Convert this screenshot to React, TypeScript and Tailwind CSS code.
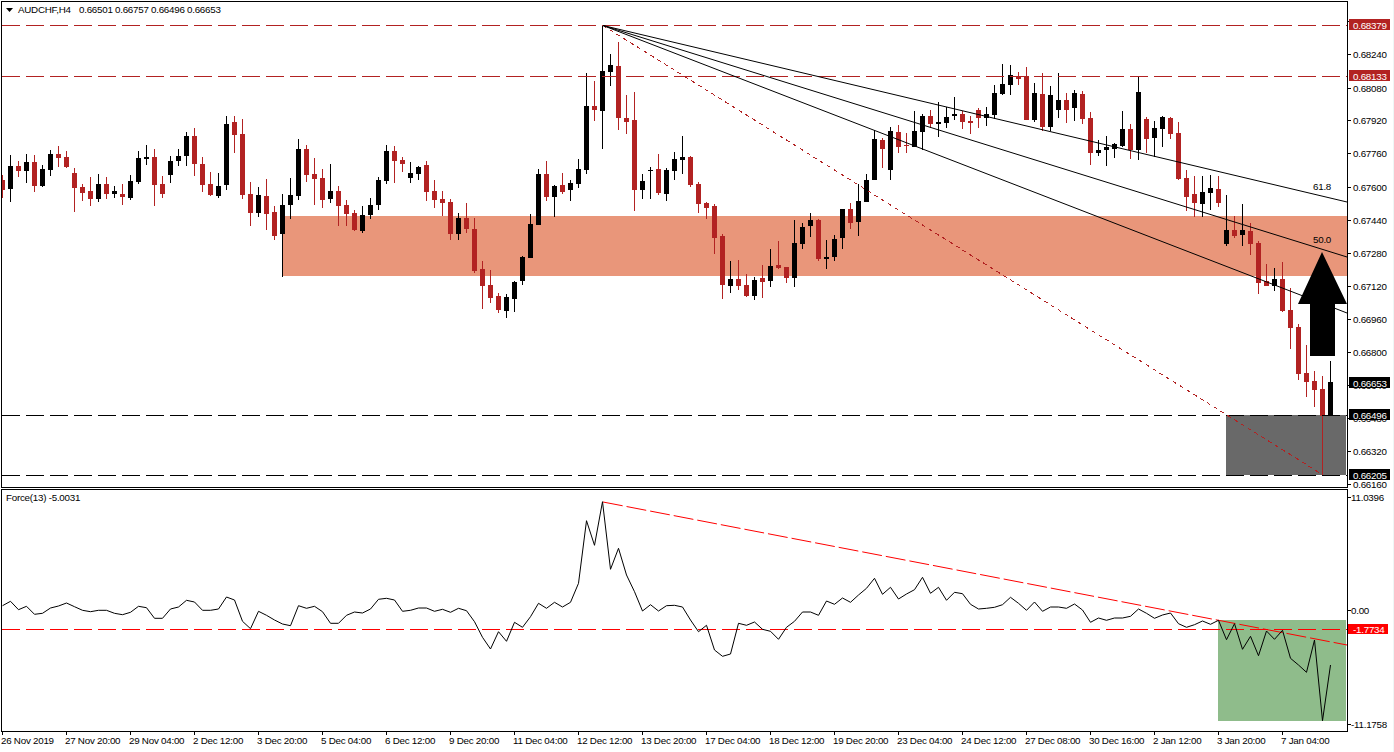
const R = 1;
const K = 0;
// [colour, wick top, body top, body bottom, wick bottom] in tripled page pixels
const candles: number[][] = [
[R,525,540,570,594],[K,465,498,567,605],[R,483,498,513,531],[K,462,486,513,549],[R,465,486,558,576],[K,495,507,558,561],[K,450,462,510,528],[R,438,462,474,501],[R,453,471,501,504],[R,504,519,564,636],
[R,552,561,579,603],[R,531,573,597,618],[K,522,552,597,606],[R,531,552,582,597],[K,558,573,582,594],[R,552,582,591,615],[K,525,543,594,600],[K,453,474,546,552],[K,435,471,477,495],[R,447,471,555,618],
[R,528,552,582,594],[K,468,483,525,549],[K,447,468,483,498],[K,396,408,468,498],[R,384,408,492,528],[R,471,492,555,576],[R,516,552,585,588],[K,519,558,588,594],[K,348,372,555,570],[R,348,366,405,459],
[R,357,402,585,597],[R,546,582,639,678],[K,561,585,639,651],[R,537,588,642,690],[R,618,636,708,720],[K,582,615,702,830],[K,534,585,615,657],[K,417,447,588,600],[R,435,447,525,546],[R,474,522,537,615],
[R,507,534,600,624],[K,492,573,597,609],[R,558,573,618,678],[R,600,615,642,678],[R,630,639,690,693],[K,618,645,693,699],[K,594,615,645,657],[K,531,540,615,630],[K,435,453,543,552],[R,438,453,483,549],
[R,471,480,492,516],[K,486,519,534,549],[K,498,501,522,540],[R,483,495,576,603],[R,540,573,600,624],[R,573,597,609,648],[R,597,606,702,720],[K,639,654,702,720],[R,609,654,687,699],[R,654,687,813,819],
[R,783,807,858,927],[R,810,855,894,909],[R,879,888,930,939],[K,882,891,933,954],[K,843,846,897,936],[K,768,771,843,855],[K,642,672,774,774],[K,507,522,675,675],[R,483,522,591,603],[K,555,558,591,651],
[R,519,555,576,582],[K,540,549,570,603],[K,477,507,552,564],[K,219,318,510,522],[R,243,318,330,363],[K,78,213,333,447],[K,162,195,216,258],[R,126,198,354,390],[R,285,354,366,402],[R,276,360,570,633],
[K,522,543,570,597],[K,501,510,513,597],[R,462,507,579,585],[K,504,510,582,603],[K,456,477,513,540],[K,408,471,480,522],[R,468,471,555,561],[R,546,552,612,639],[R,606,609,624,657],[R,612,618,714,762],
[R,702,708,855,897],[K,783,837,858,879],[R,780,837,858,870],[R,822,855,888,891],[K,831,840,888,900],[R,795,834,846,894],[K,747,798,843,861],[R,723,795,804,807],[R,801,801,834,849],[K,660,729,834,861],
[K,669,681,732,747],[K,639,660,678,711],[R,657,660,777,783],[K,720,771,777,807],[K,705,717,771,783],[K,627,627,714,747],[R,609,627,669,687],[K,552,603,666,708],[K,522,540,606,606],[K,390,417,540,540],
[R,414,420,447,504],[K,381,393,510,540],[R,375,396,441,459],[R,399,435,438,459],[K,333,393,441,441],[K,342,348,396,450],[R,330,348,372,384],[K,306,366,372,411],[K,321,351,369,384],[K,291,342,348,360],
[R,333,342,366,387],[R,348,363,369,402],[R,324,330,354,384],[K,321,342,354,378],[K,255,279,345,357],[K,192,252,282,285],[K,195,225,255,285],[R,216,228,237,255],[R,201,228,360,360],[K,249,279,360,366],
[R,219,282,381,393],[K,258,285,381,393],[K,219,300,330,354],[R,279,300,330,369],[K,270,279,324,363],[R,273,282,357,372],[R,336,354,459,495],[K,420,450,459,468],[K,408,441,450,498],[K,429,432,447,474],
[K,333,387,438,441],[R,372,387,450,477],[K,231,276,450,480],[R,351,357,417,459],[K,363,384,414,471],[K,348,351,387,441],[R,351,354,402,417],[R,366,399,537,540],[R,510,534,591,633],[R,528,582,609,651],
[K,528,576,612,651],[K,525,564,579,630],[R,528,567,609,621],[K,585,690,732,738],[R,648,690,708,714],[K,612,690,705,738],[R,669,693,732,765],[R,723,729,849,882],[R,792,843,858,858],[K,804,837,858,873],
[R,786,837,933,936],[R,864,930,984,1047],[R,972,981,1122,1140],[R,1035,1119,1146,1191],[R,1113,1143,1170,1221],[R,1128,1167,1248,1425],[K,1083,1146,1248,1248],
];

// indicator samples, tripled pixels below y = 480
const force: number[] = [
377,364,389,379,403,400,384,378,369,380,391,395,391,391,400,404,397,379,383,415,
415,387,381,361,366,391,391,387,351,360,424,446,394,406,420,432,437,377,385,379,
395,430,430,406,396,399,387,358,355,360,394,391,384,384,394,388,397,385,392,425,
472,507,455,484,427,442,410,370,385,367,381,367,310,122,196,65,268,205,285,335,
393,374,393,377,376,381,420,455,436,510,529,522,430,436,426,448,454,478,442,424,
396,396,406,363,373,354,367,345,325,295,343,322,357,342,329,292,340,322,361,337,
341,373,387,385,382,374,352,370,391,366,394,381,381,385,372,390,427,414,421,414,
414,409,387,400,415,405,399,431,442,434,423,433,421,479,431,508,469,527,453,478,
451,535,555,577,480,722,555,
];

const forcePoints = force.map((v, i) => `${2.5 + 8 * i},${(480 + v / 3).toFixed(1)}`).join(" ");

const priceTicks: [string, number][] = [
  ["0.68400", 21], ["0.68240", 54], ["0.68080", 88], ["0.67920", 120], ["0.67760", 153], ["0.67600", 187],
  ["0.67440", 220], ["0.67280", 253], ["0.67120", 286], ["0.66960", 319], ["0.66800", 352], ["0.66640", 385],
  ["0.66480", 418], ["0.66320", 451], ["0.66160", 484],
];
const priceTags: [string, number, string][] = [
  ["0.68379", 25, "#b22222"], ["0.68133", 76, "#b22222"], ["0.66653", 383, "#000000"],
  ["0.66496", 415, "#000000"], ["0.66205", 475, "#000000"],
];
const timeLabels = [
  "26 Nov 2019", "27 Nov 20:00", "29 Nov 04:00", "2 Dec 12:00", "3 Dec 20:00", "5 Dec 04:00", "6 Dec 12:00",
  "9 Dec 20:00", "11 Dec 04:00", "12 Dec 12:00", "13 Dec 20:00", "17 Dec 04:00", "18 Dec 12:00", "19 Dec 20:00",
  "23 Dec 04:00", "24 Dec 12:00", "27 Dec 08:00", "30 Dec 16:00", "2 Jan 12:00", "3 Jan 20:00", "7 Jan 04:00",
];

function Candle({ c, i }: { c: number[]; i: number }) {
  const x = 2 + 8 * i;
  const fill = c[0] === R ? "#b22222" : "#000000";
  const top = Math.round(c[2] / 3);
  const bottom = Math.max(Math.round(c[3] / 3), top + 1);
  const hi = Math.round(c[1] / 3);
  const lo = Math.round(c[4] / 3);
  return (
    <g fill={fill} shapeRendering="crispEdges">
      <rect x={x} y={hi} width={1} height={lo - hi} />
      <rect x={x - 2} y={top} width={5} height={bottom - top} />
    </g>
  );
}

function PriceChart() {
  return (
    <svg viewBox="2 2 1345 485" className="block w-[1345px] h-[485px]">
      <rect x={283} y={216} width={1064} height={60} fill="#e9967a" />
      <rect x={1226} y={415} width={120} height={60} fill="#696969" />
      {candles.map((c, i) => (
        <Candle key={i} c={c} i={i} />
      ))}
      <g shapeRendering="crispEdges" strokeWidth={1} strokeDasharray="18 6" fill="none">
        <line x1={2} y1={25.5} x2={1347} y2={25.5} stroke="#b22222" />
        <line x1={2} y1={76.5} x2={1347} y2={76.5} stroke="#b22222" />
        <line x1={2} y1={415.5} x2={1347} y2={415.5} stroke="#000000" />
        <line x1={2} y1={475.5} x2={1347} y2={475.5} stroke="#000000" />
      </g>
      <line x1={603} y1={25.5} x2={1323} y2={475} stroke="#b22222" strokeWidth={1} strokeDasharray="4 4" shapeRendering="crispEdges" />
      <g stroke="#000000" strokeWidth={1} fill="none">
        <line x1={603} y1={25.5} x2={1347} y2={202} />
        <line x1={603} y1={25.5} x2={1347} y2={257} />
        <line x1={603} y1={25.5} x2={1347} y2={313} />
      </g>
      <polygon points="1322,252 1347,304 1335,304 1335,356 1310,356 1310,304 1298,304" fill="#000000" />
      <polygon points="6,8 13,8 9.5,12" fill="#000000" />
      <g fill="#000000">
        <text x={18} y={13}>AUDCHF,H4</text>
        <text x={79} y={13}>0.66501</text>
        <text x={115} y={13}>0.66757</text>
        <text x={151} y={13}>0.66496</text>
        <text x={187} y={13}>0.66653</text>
        <text x={1313} y={190}>61.8</text>
        <text x={1313} y={243}>50.0</text>
      </g>
    </svg>
  );
}

function PriceAxis() {
  return (
    <svg viewBox="1348 0 45 488" className="block w-[45px] h-[488px]">
      <g fill="#000000">
        {priceTicks.map(([label, y]) => (
          <g key={label}>
            <rect x={1348} y={y} width={3} height={1} shapeRendering="crispEdges" />
            <text x={1353} y={y + 3.5}>{label}</text>
          </g>
        ))}
      </g>
      {priceTags.map(([label, y, bg]) => (
        <g key={label}>
          <rect x={1349} y={y - 6} width={41} height={11} fill={bg} shapeRendering="crispEdges" />
          <text x={1353} y={y + 3.5} fill="#ffffff">{label}</text>
        </g>
      ))}
    </svg>
  );
}

function ForceChart() {
  return (
    <svg viewBox="2 490 1345 241" className="block w-[1345px] h-[241px]">
      <rect x={1218} y={620} width={128} height={101} fill="#8fbc8b" />
      <line x1={2} y1={629.5} x2={1347} y2={629.5} stroke="#ff0000" strokeWidth={1} strokeDasharray="18 6" shapeRendering="crispEdges" />
      <line x1={603} y1={502} x2={1347} y2={645} stroke="#ff0000" strokeWidth={1} strokeDasharray="20 4" />
      <polyline points={forcePoints} fill="none" stroke="#000000" strokeWidth={1} />
      <text x={6} y={501} fill="#000000">Force(13) -5.0031</text>
    </svg>
  );
}

function ForceAxis() {
  const ticks: [string, number, number][] = [
    ["11.0396", 497, 1351],
    ["0.00", 610, 1351],
    ["-11.1758", 724, 1351],
  ];
  return (
    <svg viewBox="1348 488 45 244" className="block w-[45px] h-[244px]">
      <g fill="#000000">
        {ticks.map(([label, y, x]) => (
          <g key={label}>
            <rect x={1348} y={y} width={3} height={1} shapeRendering="crispEdges" />
            <text x={x} y={y + 3.5}>{label}</text>
          </g>
        ))}
      </g>
      <rect x={1348} y={624} width={40} height={10} fill="#ff0000" shapeRendering="crispEdges" />
      <text x={1353} y={632.5} fill="#ffffff">-1.7734</text>
    </svg>
  );
}

export default function App() {
  return (
    <div className="w-[1394px] h-[752px] overflow-hidden bg-white border-r border-[#eef6f6] flex flex-col [font-family:'Liberation_Sans',sans-serif] text-[9.8px] tracking-[-0.25px] text-black">
      <div className="flex h-[488px] shrink-0">
        <div className="w-[1348px] pl-px pt-px">
          <div className="w-[1347px] h-[487px] border border-black">
            <PriceChart />
          </div>
        </div>
        <PriceAxis />
      </div>
      <div className="flex h-[244px] shrink-0">
        <div className="w-[1348px] pl-px pt-px">
          <div className="w-[1347px] h-[243px] border border-black">
            <ForceChart />
          </div>
        </div>
        <ForceAxis />
      </div>
      <div className="flex pl-[2px] h-[20px] shrink-0">
        {timeLabels.map((label) => (
          <div key={label} className="w-[64px] shrink-0">
            <div className="w-px h-[3px] bg-black" />
            <div className="leading-[11px] whitespace-nowrap -ml-px">{label}</div>
          </div>
        ))}
      </div>
    </div>
  );
}
